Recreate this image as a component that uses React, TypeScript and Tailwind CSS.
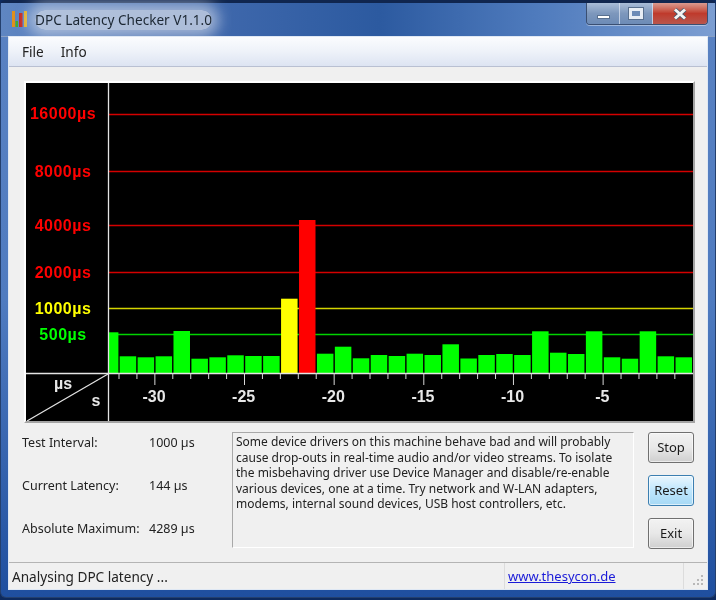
import React from 'react';

const tops = [356.3, 357.3, 356.3, 331, 358.7, 357.3, 355.3, 356, 356, 298.7, 220, 353.7, 346.7, 358.3, 355, 356, 353.7, 355, 344.3, 358.5, 355, 354, 355, 331.3, 352.7, 354, 331.3, 357.3, 358.7, 331.3, 356.3, 357.3];

const levels = [
    { y: 114, color: '#d40000', text: '#ff0000', label: '16000µs', base: 119 },
    { y: 171, color: '#d40000', text: '#ff0000', label: '8000µs', base: 177 },
    { y: 225, color: '#d40000', text: '#ff0000', label: '4000µs', base: 231 },
    { y: 272, color: '#d40000', text: '#ff0000', label: '2000µs', base: 278 },
    { y: 308, color: '#d4d400', text: '#ffff00', label: '1000µs', base: 314 },
    { y: 334, color: '#00d400', text: '#00ff00', label: '500µs', base: 340 },
];

const seconds = ['-30', '-25', '-20', '-15', '-10', '-5'];

const barColor = (top: number) => {
    if (top < 250) return '#ff0000';
    if (top < 325) return '#ffff00';
    return '#00ff00';
};

const Chart = () => (
    <svg viewBox="26 83 667 338" className="block w-[667px] h-[338px] bg-black font-['Liberation_Sans',sans-serif] font-bold">
        {levels.map(l => (
            <g key={l.label}>
                <line x1="108" x2="693" y1={l.y + 0.5} y2={l.y + 0.5} stroke={l.color} strokeWidth="1.4" />
                <text x="63" y={l.base} textAnchor="middle" fontSize="16" letterSpacing="0.5" fill={l.text}>{l.label}</text>
            </g>
        ))}

        {/* first bar is cut off by the axis */}
        <rect x="109" y="332.3" width="9.4" height="40.7" fill="#00ff00" />
        {tops.map((top, i) => (
            <rect key={i} x={119.7 + i * 17.93} y={top} width="16.5" height={373 - top} fill={barColor(top)} />
        ))}

        <line x1="26" x2="693" y1="373.5" y2="373.5" stroke="#e4e4e4" strokeWidth="1.3" />
        <line x1="108.5" x2="108.5" y1="83" y2="421" stroke="#e4e4e4" strokeWidth="1.3" />
        <line x1="27" y1="421" x2="108" y2="374" stroke="#e4e4e4" strokeWidth="1.2" />

        {tops.map((_, i) => (
            <line key={i} x1={119 + i * 17.93} x2={119 + i * 17.93} y1="373" y2={i % 5 === 2 ? 385 : 379} stroke="#d8d8d8" />
        ))}

        {seconds.map((s, i) => (
            <text key={s} x={154 + i * 89.65} y="402" textAnchor="middle" fontSize="16" fill="#e8e8e8">{s}</text>
        ))}

        <text x="63" y="389" textAnchor="middle" fontSize="16" fill="#e8e8e8">µs</text>
        <text x="96" y="406" textAnchor="middle" fontSize="16" fill="#e8e8e8">s</text>
    </svg>
);

const CaptionButtons = () => (
    <div className="flex h-[22px] mr-[7px] border border-[#3a4f72] border-t-0 rounded-b-[4px] overflow-hidden shadow-[0_1px_0_rgba(255,255,255,0.4)]">
        <div className="w-[33px] flex items-center justify-center border-r border-[#dfe7f3]/70 bg-gradient-to-b from-[#a9bdd8] via-[#7d97bc] to-[#6d8bb6]">
            <div className="w-[13px] h-[4px] mt-[6px] bg-white border border-[#59708f]" />
        </div>
        <div className="w-[33px] flex items-center justify-center border-r border-[#dfe7f3]/70 bg-gradient-to-b from-[#a9bdd8] via-[#7d97bc] to-[#6d8bb6]">
            <div className="w-[14px] h-[11px] border-[3px] border-[#e8edf4] outline outline-1 outline-[#59708f] bg-[#6d8bb6]" />
        </div>
        <div className="w-[54px] flex items-center justify-center bg-gradient-to-b from-[#d99a90] via-[#bf3a2c] to-[#b9554c]">
            <svg width="14" height="12" viewBox="0 0 14 12">
                <path d="M2 1.5 L12 10.5 M12 1.5 L2 10.5" stroke="#4a5a6c" strokeWidth="4.4" />
                <path d="M2 1.5 L12 10.5 M12 1.5 L2 10.5" stroke="#f4f4f4" strokeWidth="3" />
            </svg>
        </div>
    </div>
);

const AppIcon = () => (
    <svg width="17" height="17" viewBox="0 0 17 17" className="shrink-0">
        <rect x="0" y="0" width="3" height="16" fill="#e0901c" />
        <rect x="3.5" y="10" width="2.5" height="6" fill="#3fae2a" />
        <rect x="7" y="2" width="3.5" height="14" fill="#c8261e" />
        <rect x="12" y="0" width="3" height="16" fill="#e8b020" />
    </svg>
);

const PushButton = ({ label, active }: { label: string; active?: boolean }) => (
    <button
        className={
            active
                ? 'w-[46px] h-[31px] rounded-[3px] border border-[#3c7fb1] bg-gradient-to-b from-[#eaf6fd] via-[#bee6fd] to-[#a7d9f5] text-[13px] text-[#1a1a1a] shadow-[inset_0_0_0_1px_rgba(255,255,255,0.6)]'
                : 'w-[46px] h-[31px] rounded-[3px] border border-[#707070] bg-gradient-to-b from-[#f2f2f2] via-[#e8e8e8] to-[#cfcfcf] text-[13px] text-[#1a1a1a] shadow-[inset_0_0_0_1px_rgba(255,255,255,0.6)]'
        }
    >
        {label}
    </button>
);

const Stat = ({ label, value }: { label: string; value: string }) => (
    <div className="flex h-[20px] pt-[2px] items-center whitespace-nowrap">
        <span className="w-[127px]">{label}</span>
        <span>{value}</span>
    </div>
);

export default function App() {
    return (
        <div className="w-[716px] h-[600px] overflow-hidden bg-[#0d2a5e] font-['Noto_Sans',sans-serif] text-[13.6px] text-[#222] blur-[0.4px]">
            <div className="h-[598px] flex flex-col rounded-[6px] border border-[#24406e] border-t-[3px] border-t-[#10264f] bg-gradient-to-b from-[#5a82c2] via-[#4f7bc0] to-[#1f4f9f]">
                {/* title bar */}
                <div className="h-[34px] shrink-0 flex justify-between items-start bg-[linear-gradient(90deg,#5f86c2_0%,#3f68ac_30%,#2c5aa0_53%,#4f7bbd_75%,#7c9ed2_100%)] border-b border-[#8aa0c4]">
                    <div className="flex items-start gap-[6px] pl-[11px] pt-[8px]">
                        <AppIcon />
                        <span className="text-[#1c2733] -mt-[1px] rounded-full bg-[#c8d2e4]/80 shadow-[0_0_14px_7px_rgba(200,210,228,0.7)]">DPC Latency Checker V1.1.0</span>
                    </div>
                    <CaptionButtons />
                </div>

                {/* client area */}
                <div className="flex-1 mx-[8px] mb-[8px] flex flex-col bg-[#f0f0f0] shadow-[0_0_0_1px_#dfe8f4]">
                    <div className="h-[30px] shrink-0 flex items-center gap-[17px] pl-[13px] pt-[2px] border-b border-[#b9c0d2] bg-gradient-to-b from-[#fbfcfe] via-[#eef2f9] to-[#dde4f2]">
                        <span>File</span>
                        <span>Info</span>
                    </div>

                    <div className="flex-1 flex flex-col pt-[14px] pl-[15px] pr-[12px]">
                        <div className="w-[671px] border-2 border-t-white border-l-white border-r-[#a4a4a4] border-b-[#a4a4a4]">
                            <Chart />
                        </div>

                        <div className="flex mt-[9px]">
                            <div className="w-[210px] flex flex-col gap-[23px] -ml-[2px] text-[12.5px]">
                                <Stat label="Test Interval:" value="1000 µs" />
                                <Stat label="Current Latency:" value="144 µs" />
                                <Stat label="Absolute Maximum:" value="4289 µs" />
                            </div>
                            <div className="w-[402px] h-[116px] border border-t-[#a8a8a8] border-l-[#a8a8a8] border-r-white border-b-white pl-[3px] pt-[1px] text-[12px] leading-[15.6px] whitespace-nowrap">
                                Some device drivers on this machine behave bad and will probably
                                <br />
                                cause drop-outs in real-time audio and/or video streams. To isolate
                                <br />
                                the misbehaving driver use Device Manager and disable/re-enable
                                <br />
                                various devices, one at a time. Try network and W-LAN adapters,
                                <br />
                                modems, internal sound devices, USB host controllers, etc.
                            </div>
                            <div className="ml-[14px] flex flex-col gap-[12px]">
                                <PushButton label="Stop" />
                                <PushButton label="Reset" active />
                                <PushButton label="Exit" />
                            </div>
                        </div>
                    </div>

                    {/* status bar */}
                    <div className="h-[27px] shrink-0 flex items-center border-t border-[#b4b4b4] bg-[#f0f0f0]">
                        <div className="w-[495px] pl-[3px] pt-[2px]">Analysing DPC latency ...</div>
                        <div className="w-[180px] h-full flex items-center pl-[3px] pt-[2px] border-l border-[#dcdcdc] border-r">
                            <span className="text-[#1a1ad8] underline text-[13px]">www.thesycon.de</span>
                        </div>
                        <div className="flex-1 h-full flex items-end justify-end pr-[3px] pb-[3px]">
                            <svg width="11" height="11" viewBox="0 0 11 11" fill="#b8b8b8">
                                <rect x="8" y="0" width="2" height="2" />
                                <rect x="4" y="4" width="2" height="2" />
                                <rect x="8" y="4" width="2" height="2" />
                                <rect x="0" y="8" width="2" height="2" />
                                <rect x="4" y="8" width="2" height="2" />
                                <rect x="8" y="8" width="2" height="2" />
                            </svg>
                        </div>
                    </div>
                </div>
            </div>
        </div>
    );
}
